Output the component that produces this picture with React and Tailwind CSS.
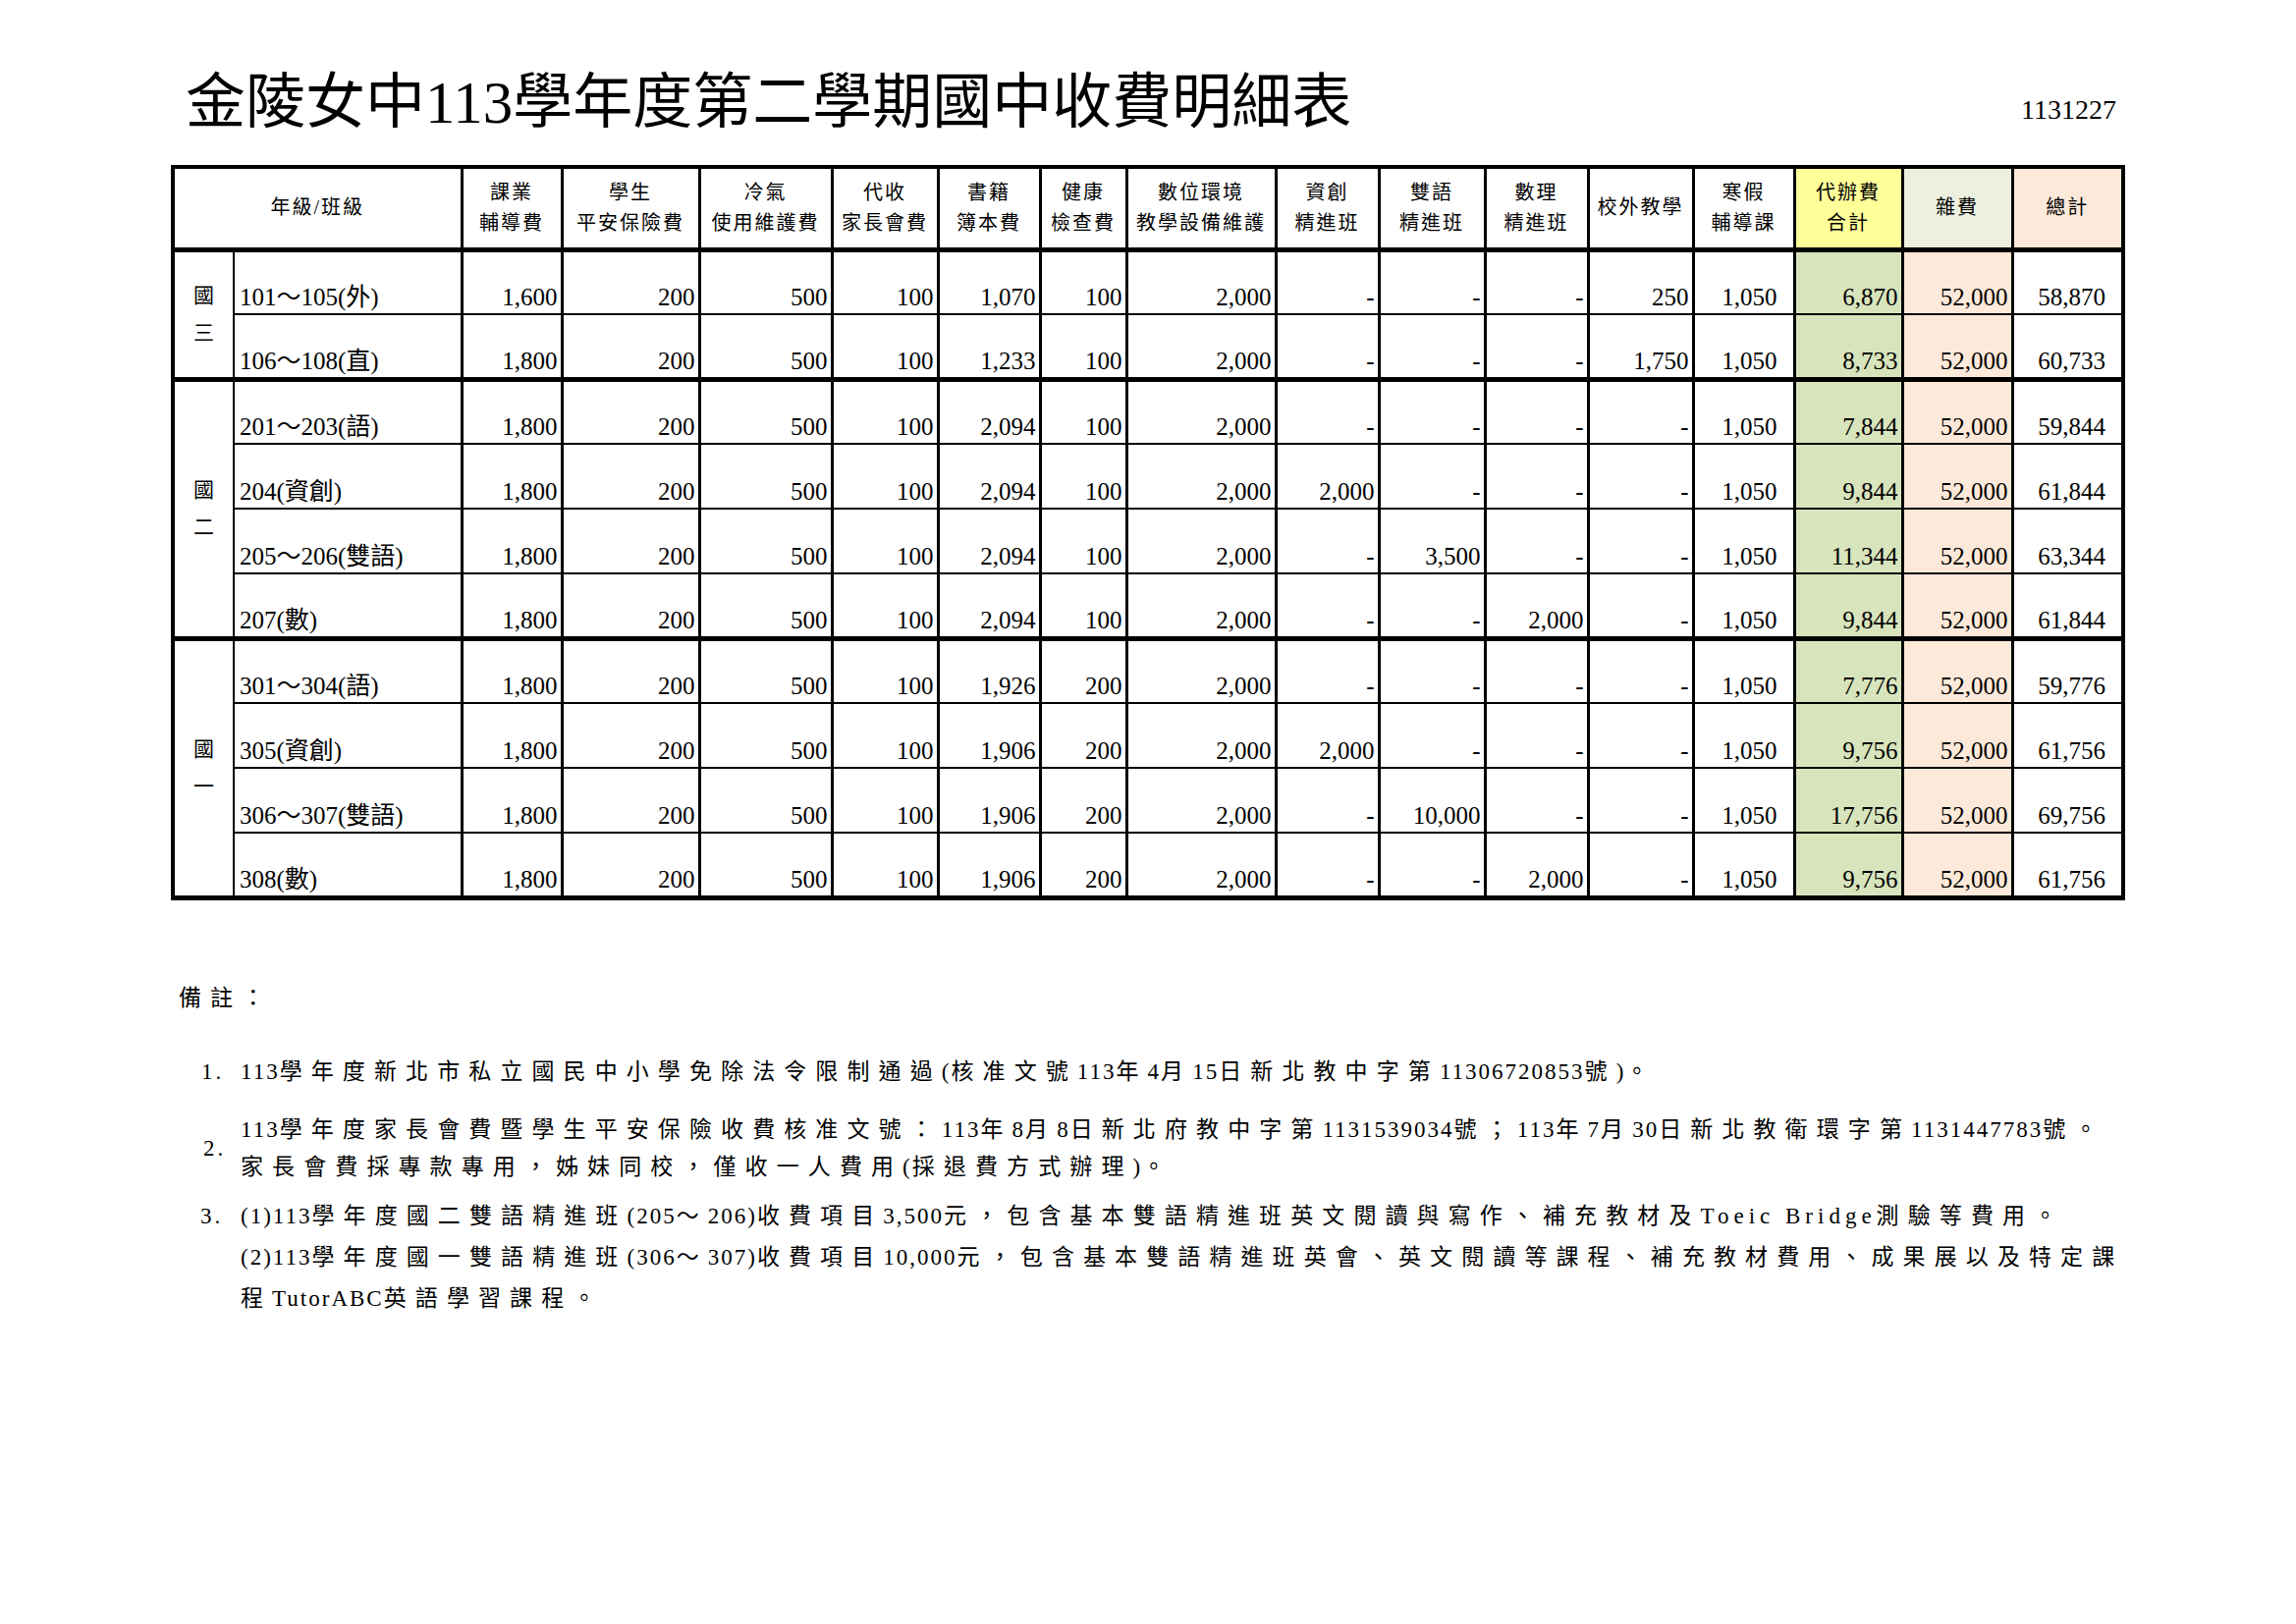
import React from 'react';

const headers = [
  ['課業', '輔導費'],
  ['學生', '平安保險費'],
  ['冷氣', '使用維護費'],
  ['代收', '家長會費'],
  ['書籍', '簿本費'],
  ['健康', '檢查費'],
  ['數位環境', '教學設備維護'],
  ['資創', '精進班'],
  ['雙語', '精進班'],
  ['數理', '精進班'],
  ['校外教學'],
  ['寒假', '輔導課'],
  ['代辦費', '合計'],
  ['雜費'],
  ['總計'],
];

const headerBg = ['', '', '', '', '', '', '', '', '', '', '', '', 'bg-[#ffff99]', 'bg-[#ebf1de]', 'bg-[#fde9d9]'];

const colWidths = [62, 232, 102, 140, 135, 108, 104, 88, 152, 105, 108, 105, 107, 103, 110, 112, 113];

const groups = [
  {
    g: ['國', '三'],
    rows: [
      ['101～105(外)', '1,600', '200', '500', '100', '1,070', '100', '2,000', '-', '-', '-', '250', '1,050', '6,870', '52,000', '58,870'],
      ['106～108(直)', '1,800', '200', '500', '100', '1,233', '100', '2,000', '-', '-', '-', '1,750', '1,050', '8,733', '52,000', '60,733'],
    ],
  },
  {
    g: ['國', '二'],
    rows: [
      ['201～203(語)', '1,800', '200', '500', '100', '2,094', '100', '2,000', '-', '-', '-', '-', '1,050', '7,844', '52,000', '59,844'],
      ['204(資創)', '1,800', '200', '500', '100', '2,094', '100', '2,000', '2,000', '-', '-', '-', '1,050', '9,844', '52,000', '61,844'],
      ['205～206(雙語)', '1,800', '200', '500', '100', '2,094', '100', '2,000', '-', '3,500', '-', '-', '1,050', '11,344', '52,000', '63,344'],
      ['207(數)', '1,800', '200', '500', '100', '2,094', '100', '2,000', '-', '-', '2,000', '-', '1,050', '9,844', '52,000', '61,844'],
    ],
  },
  {
    g: ['國', '一'],
    rows: [
      ['301～304(語)', '1,800', '200', '500', '100', '1,926', '200', '2,000', '-', '-', '-', '-', '1,050', '7,776', '52,000', '59,776'],
      ['305(資創)', '1,800', '200', '500', '100', '1,906', '200', '2,000', '2,000', '-', '-', '-', '1,050', '9,756', '52,000', '61,756'],
      ['306～307(雙語)', '1,800', '200', '500', '100', '1,906', '200', '2,000', '-', '10,000', '-', '-', '1,050', '17,756', '52,000', '69,756'],
      ['308(數)', '1,800', '200', '500', '100', '1,906', '200', '2,000', '-', '-', '2,000', '-', '1,050', '9,756', '52,000', '61,756'],
    ],
  },
];

function cellBg(i) {
  if (i === 13) return 'bg-[#d8e4bc]';
  if (i === 14) return 'bg-[#fde9d9]';
  return '';
}

function cellPad(i) {
  if (i === 12 || i === 15) return 'pr-[16px]';
  return 'pr-[3px]';
}

function Runs({ text }) {
  const parts = text.split(/([\x20-\x7E]+)/);
  return (
    <>
      {parts.map((p, i) => {
        if (p === '') return null;
        if (p === 'Toeic Bridge') {
          return (
            <span key={i} className="tracking-[5px]">
              {p}
            </span>
          );
        }
        if (/^[\x20-\x7E]+$/.test(p)) {
          return (
            <span key={i} className="tracking-[2px]">
              {p}
            </span>
          );
        }
        return (
          <span key={i} className="tracking-[9.1px]">
            {p}
          </span>
        );
      })}
    </>
  );
}

export default function App() {
  return (
    <div className="w-[2338px] h-[1654px] bg-white text-black pl-[174px] pt-[60px] font-['Liberation_Serif','Noto_Sans_CJK_TC',serif]">
      <div className="flex justify-between w-[1986px] h-[90px]">
        <div className="ml-[15px] text-[61px] leading-[90px] whitespace-nowrap">
          金陵女中113學年度第二學期國中收費明細表
        </div>
        <div className="mr-[5px] mt-[37px] text-[28px] leading-[30px]">1131227</div>
      </div>

      <table className="mt-[18px] border-collapse table-fixed w-[1986px] border-4 border-black">
        <colgroup>
          {colWidths.map((w, i) => (
            <col key={i} style={{ width: w }} />
          ))}
        </colgroup>
        <thead>
          <tr className="h-[84px]">
            <th
              colSpan={2}
              className="border-r-[3px] border-b-[5px] border-black font-normal text-[20px] tracking-[2px] leading-[31px] text-center align-middle"
            >
              年級/班級
            </th>
            {headers.map((h, i) => (
              <th
                key={i}
                className={`border-r-[3px] border-b-[5px] border-black font-normal text-[20px] tracking-[2px] leading-[31px] text-center align-middle whitespace-nowrap ${headerBg[i]}`}
              >
                {h.map((line, j) => (
                  <div key={j}>{line}</div>
                ))}
              </th>
            ))}
          </tr>
        </thead>
        <tbody>
          {groups.map((grp, gi) =>
            grp.rows.map((row, ri) => {
              const last = ri === grp.rows.length - 1;
              const bb = last ? 'border-b-[5px]' : 'border-b-2';
              return (
                <tr key={`${gi}-${ri}`} className="h-[66px]">
                  {ri === 0 && (
                    <td
                      rowSpan={grp.rows.length}
                      className="border-r-2 border-b-[5px] border-black text-center align-middle text-[21px] leading-[38px]"
                    >
                      <div>{grp.g[0]}</div>
                      <div>{grp.g[1]}</div>
                    </td>
                  )}
                  {row.map((v, i) =>
                    i === 0 ? (
                      <td
                        key={i}
                        className={`border-r-[3px] ${bb} border-black text-left align-bottom pl-[5px] pb-[1px] text-[25px] leading-[30px] whitespace-nowrap`}
                      >
                        {v}
                      </td>
                    ) : (
                      <td
                        key={i}
                        className={`border-r-[3px] ${bb} border-black text-right align-bottom ${cellPad(i)} pb-[1px] text-[25px] leading-[30px] whitespace-nowrap ${cellBg(i)}`}
                      >
                        {v}
                      </td>
                    )
                  )}
                </tr>
              );
            })
          )}
        </tbody>
      </table>

      <div className="mt-[85px] text-[23px] whitespace-nowrap">
        <div className="pl-[8px] leading-[30px]">
          <Runs text="備註：" />
        </div>

        <div className="mt-[42px] flex items-center leading-[36px]">
          <div className="w-[71px] pl-[31px] shrink-0 tracking-[3px]">1.</div>
          <div>
            <Runs text="113學年度新北市私立國民中小學免除法令限制通過(核准文號113年4月15日新北教中字第11306720853號)。" />
          </div>
        </div>

        <div className="mt-[22px] flex items-center leading-[38px]">
          <div className="w-[71px] pl-[33px] shrink-0 tracking-[3px]">2.</div>
          <div>
            <div>
              <Runs text="113學年度家長會費暨學生平安保險收費核准文號：113年8月8日新北府教中字第1131539034號；113年7月30日新北教衛環字第1131447783號。" />
            </div>
            <div>
              <Runs text="家長會費採專款專用，姊妹同校，僅收一人費用(採退費方式辦理)。" />
            </div>
          </div>
        </div>

        <div className="mt-[10px] flex items-start leading-[42px]">
          <div className="w-[71px] pl-[30px] shrink-0 tracking-[3px]">3.</div>
          <div>
            <div>
              <Runs text="(1)113學年度國二雙語精進班(205～206)收費項目3,500元，包含基本雙語精進班英文閱讀與寫作、補充教材及Toeic Bridge測驗等費用。" />
            </div>
            <div>
              <Runs text="(2)113學年度國一雙語精進班(306～307)收費項目10,000元，包含基本雙語精進班英會、英文閱讀等課程、補充教材費用、成果展以及特定課" />
            </div>
            <div>
              <Runs text="程TutorABC英語學習課程。" />
            </div>
          </div>
        </div>
      </div>
    </div>
  );
}
